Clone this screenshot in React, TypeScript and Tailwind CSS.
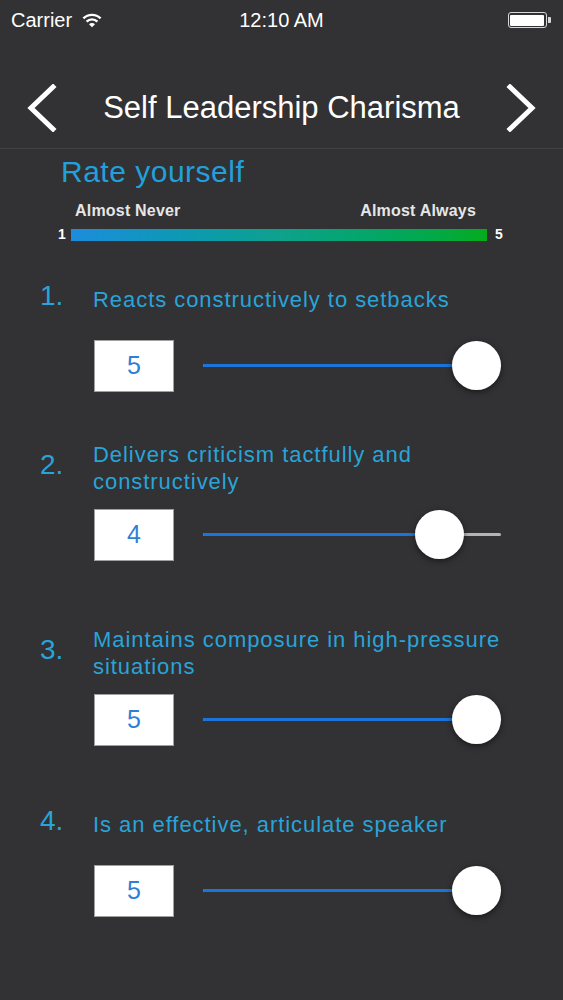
import React from 'react';

type Question = {
  n: number;
  text: string;
  value: number;
  pos: number; // thumb position 0..1 along the track
  pad: string;
};

const questions: Question[] = [
  { n: 1, text: 'Reacts constructively to setbacks', value: 5, pos: 1, pad: 'pt-[27px]' },
  { n: 2, text: 'Delivers criticism tactfully and constructively', value: 4, pos: 0.853, pad: 'pt-[49px]' },
  { n: 3, text: 'Maintains composure in high-pressure situations', value: 5, pos: 1, pad: 'pt-[65px]' },
  { n: 4, text: 'Is an effective, articulate speaker', value: 5, pos: 1, pad: 'pt-[51px]' },
];

const TRACK_W = 298;
const THUMB = 49;

const Wifi = () => (
  <svg width="20" height="15" viewBox="0 0 20 15" className="ml-[10px]">
    <path d="M1.4 5.4 A12.2 12.2 0 0 1 18.6 5.4" fill="none" stroke="white" strokeWidth="2.4" />
    <path d="M4.6 8.6 A7.7 7.7 0 0 1 15.4 8.6" fill="none" stroke="white" strokeWidth="2.4" />
    <path d="M10 14.2 L7 11.2 A4.2 4.2 0 0 1 13 11.2 Z" fill="white" />
  </svg>
);

const Battery = () => (
  <div className="flex items-center">
    <div className="w-[39px] h-[16px] rounded-[3px] border-[1.5px] border-[#d8d8d8] p-[1.5px]">
      <div className="w-full h-full bg-white rounded-[1px]" />
    </div>
    <div className="w-[3px] h-[6px] bg-[#d8d8d8] rounded-r-[1px] ml-[1px]" />
  </div>
);

const Chevron = ({ flip }: { flip?: boolean }) => (
  <svg width="30" height="48" viewBox="0 0 30 48" className={flip ? 'scale-x-[-1]' : ''}>
    <polyline points="26,3 4,24 26,45" fill="none" stroke="white" strokeWidth="5" strokeLinecap="square" />
  </svg>
);

const Slider = ({ pos }: { pos: number }) => {
  const left = pos * (TRACK_W - THUMB);
  const center = left + THUMB / 2;
  return (
    <div className="relative w-[298px] h-[52px]">
      <div className="absolute top-[24px] left-0 right-0 h-[3px] bg-[#b4b4b4] rounded-full" />
      <div className="absolute top-[24px] left-0 h-[3px] bg-[#1b74d9] rounded-full" style={{ width: center }} />
      <div
        className="absolute top-[1px] w-[49px] h-[49px] rounded-full bg-white shadow-[0_2px_6px_rgba(0,0,0,0.5)]"
        style={{ left }}
      />
    </div>
  );
};

export default function App() {
  return (
    <div className="w-[563px] h-[1000px] bg-[#323133] font-['Liberation_Sans',Arial,sans-serif] overflow-hidden">
      {/* Status bar */}
      <div className="h-[40px] px-[11px] grid grid-cols-3 items-center text-white text-[20px]">
        <div className="flex items-center">
          <span>Carrier</span>
          <Wifi />
        </div>
        <div className="text-center">12:10 AM</div>
        <div className="flex justify-end pr-[1px]">
          <Battery />
        </div>
      </div>

      {/* Nav bar */}
      <div className="pt-[36px] pb-[8px] border-b border-[#424144]">
        <div className="h-[64px] px-[27px] flex items-center justify-between">
          <Chevron />
          <h1 className="text-white text-[31px] leading-none pb-[1px]">Self Leadership Charisma</h1>
          <Chevron flip />
        </div>
      </div>

      {/* Scale legend */}
      <div className="pl-[61px] pt-[6px]">
        <div className="text-[#22a0dc] text-[30px] leading-[34px] tracking-[0.5px]">Rate yourself</div>
      </div>
      <div className="mt-[12px] ml-[75px] w-[401px] flex justify-between text-[#e6e6e6] text-[16px] font-bold leading-[20px] tracking-[0.2px]">
        <span>Almost Never</span>
        <span>Almost Always</span>
      </div>
      <div className="mt-[3px] pl-[58px] flex items-center text-white text-[14px] font-bold">
        <span className="w-[13px]">1</span>
        <div className="w-[416px] h-[12px] bg-linear-to-r from-[#1d8cdc] via-[#0fa18d] to-[#06ab18]" />
        <span className="ml-[8px]">5</span>
      </div>

      {/* Questions */}
      <div className="pl-[40px]">
        {questions.map(q => (
          <div key={q.n} className={q.pad}>
            <div className="flex items-center h-[54px]">
              <span className="w-[53px] text-[#29a3d8] text-[28px] leading-none pb-[7px]">{q.n}.</span>
              <span className="w-[420px] text-[#29a4d9] text-[22px] leading-[27px] tracking-[0.95px]">{q.text}</span>
            </div>
            <div className="mt-[14px] pl-[54px] flex items-center">
              <div className="w-[80px] h-[52px] bg-white border border-[#a0a0a0] flex items-center justify-center text-[#2f7fd4] text-[25px]">
                {q.value}
              </div>
              <div className="ml-[29px]">
                <Slider pos={q.pos} />
              </div>
            </div>
          </div>
        ))}
      </div>
    </div>
  );
}
